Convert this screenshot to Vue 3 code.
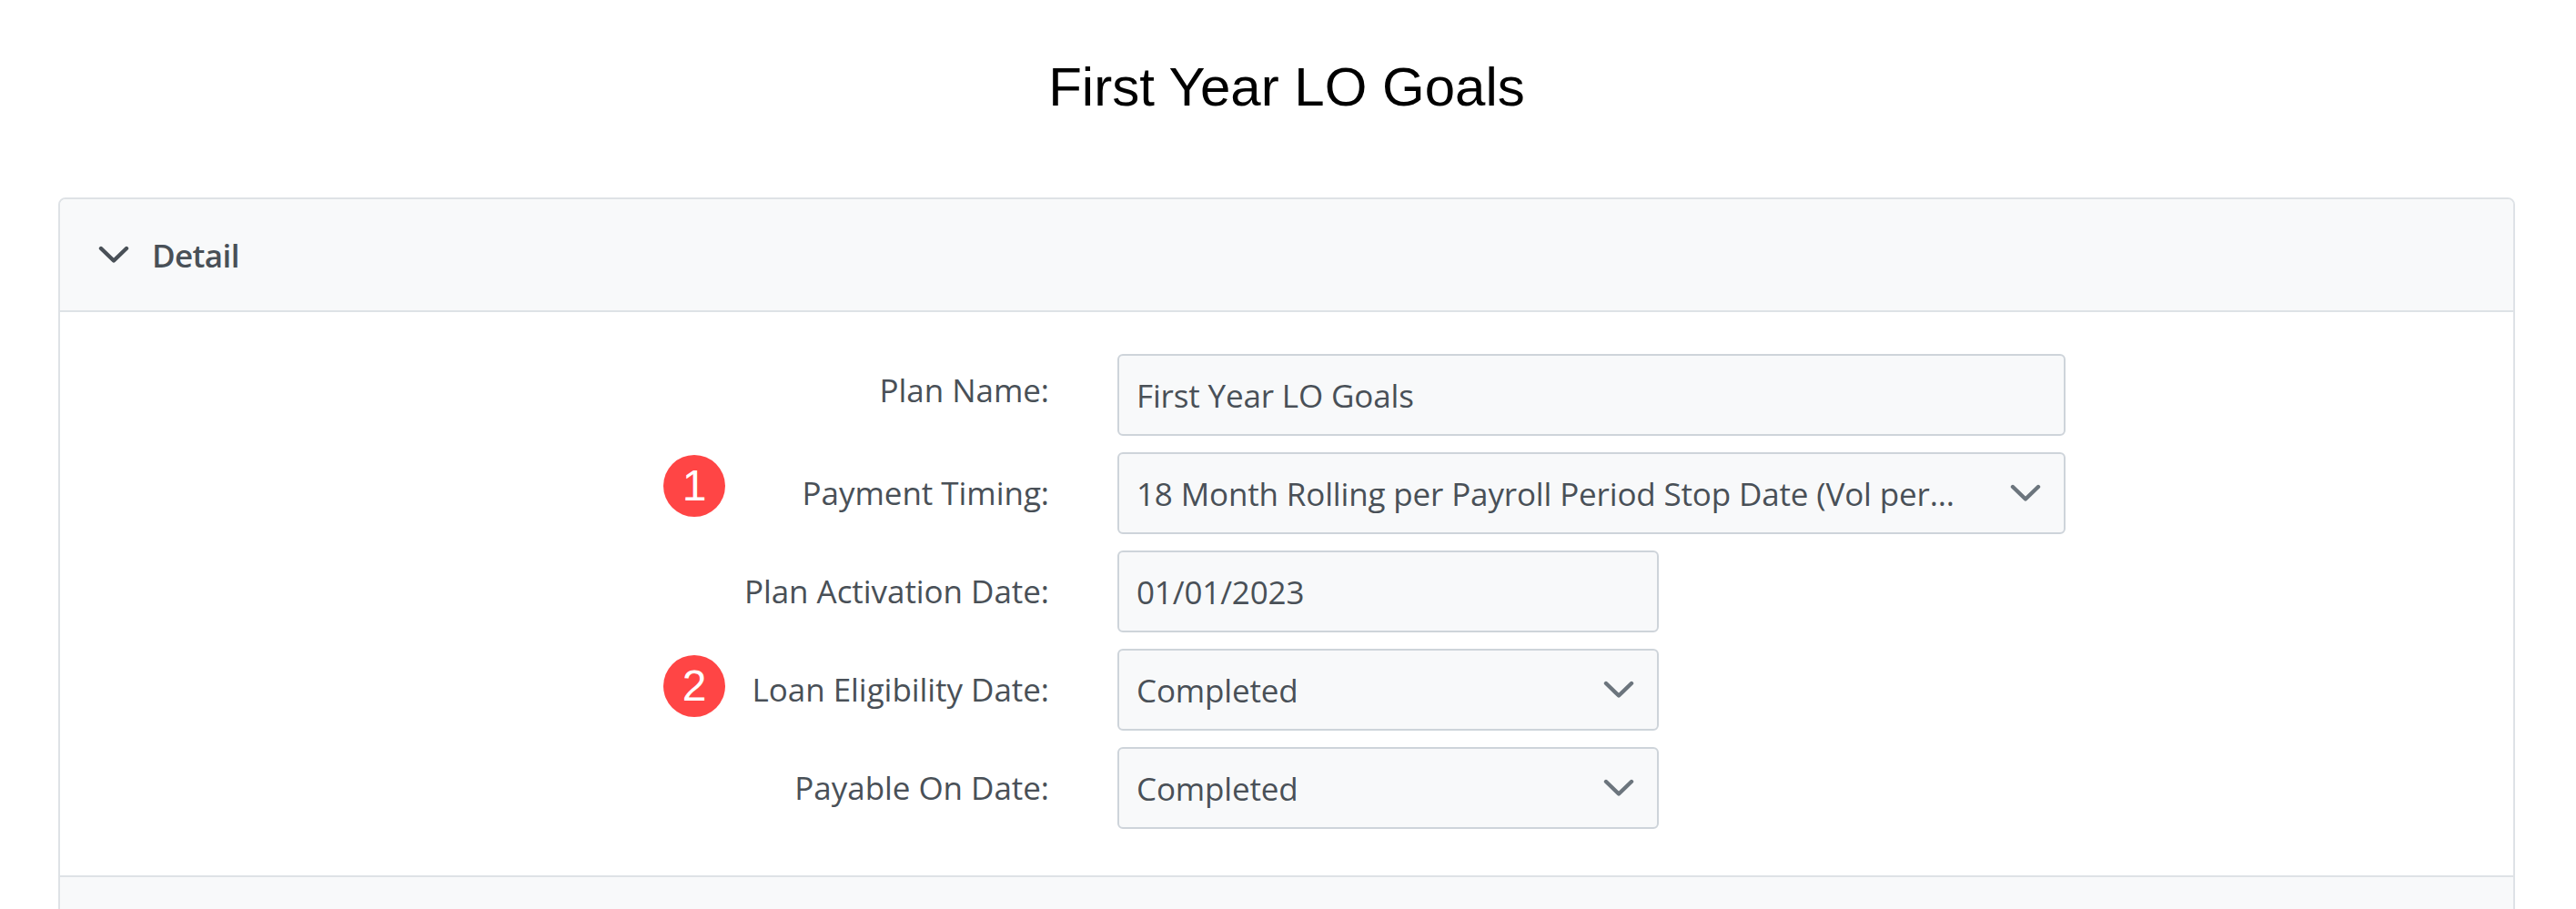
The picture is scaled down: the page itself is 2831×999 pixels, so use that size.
<script setup>
const rows = [
  { label: 'Plan Name:', value: 'First Year LO Goals', size: 'wide', select: false, raised: true },
  { label: 'Payment Timing:', value: '18 Month Rolling per Payroll Period Stop Date (Vol per...', size: 'wide', select: true, badge: 1 },
  { label: 'Plan Activation Date:', value: '01/01/2023', size: 'short', select: false },
  { label: 'Loan Eligibility Date:', value: 'Completed', size: 'short', select: true, badge: 2 },
  { label: 'Payable On Date:', value: 'Completed', size: 'short', select: true },
]
</script>

<template>
  <main class="page">
    <h1 class="title">First Year LO Goals</h1>
    <section class="card">
      <header class="card-head">
        <svg class="head-chevron" viewBox="0 0 34 20" fill="none" aria-hidden="true">
          <path d="M3 3 L17 16.5 L31 3" />
        </svg>
        <span class="head-text">Detail</span>
      </header>
      <div class="card-body">
        <div v-for="row in rows" :key="row.label" class="row">
          <label class="label" :class="{ raised: row.raised }">
            <span v-if="row.badge" class="badge" :class="'badge-' + row.badge">{{ row.badge }}</span>
            {{ row.label }}
          </label>
          <div class="control" :class="row.size">
            <span class="value">{{ row.value }}</span>
            <svg v-if="row.select" class="select-chevron" viewBox="0 0 34 20" fill="none" aria-hidden="true">
              <path d="M3 3 L17 16.5 L31 3" />
            </svg>
          </div>
        </div>
      </div>
      <div class="card-foot"></div>
    </section>
  </main>
</template>

<style>
html, body { margin: 0; background: #fff; overflow: hidden; }
</style>

<style scoped>
.page {
  height: 999px;
  overflow: hidden;
  padding: 0 67px 0 64px;
  box-sizing: border-box;
  font-family: "Open Sans", "Noto Sans", sans-serif;
  color: #495057;
}
.title {
  margin: 0;
  height: 217px;
  padding-top: 61px;
  box-sizing: border-box;
  text-align: center;
  font-family: "Liberation Sans", Arial, sans-serif;
  font-weight: 400;
  font-size: 60px;
  line-height: 70px;
  color: #000;
}
.card {
  border: 2px solid #dee2e6;
  border-radius: 8px 8px 0 0;
  overflow: hidden;
}
.card-head {
  height: 122px;
  background: #f8f9fa;
  border-bottom: 2px solid #dee2e6;
  display: flex;
  align-items: center;
  padding-left: 42px;
}
.head-chevron { width: 34px; height: 20px; flex: none; }
.head-chevron path { stroke: #495057; stroke-width: 4.4; stroke-linecap: round; stroke-linejoin: round; }
.head-text {
  margin-left: 25px;
  padding-top: 2px;
  font-size: 35px;
  font-weight: 600;
  letter-spacing: -0.6px;
  line-height: 46px;
}
.card-body {
  height: 619px;
  box-sizing: border-box;
  padding-top: 46px;
  display: flex;
  flex-direction: column;
  gap: 18px;
}
.row {
  display: grid;
  grid-template-columns: 1087px 1fr;
  column-gap: 75px;
  height: 90px;
}
.label {
  position: relative;
  text-align: right;
  font-size: 35px;
  letter-spacing: -0.05px;
  line-height: 46px;
  padding-top: 22px;
}
.label.raised { padding-top: 17px; }
.badge {
  position: absolute;
  left: 663px;
  width: 68px;
  height: 68px;
  border-radius: 50%;
  background: #ff4545;
  color: #fff;
  font-family: "Liberation Sans", Arial, sans-serif;
  font-size: 48px;
  letter-spacing: 0;
  line-height: 68px;
  text-align: center;
}
.badge-1 { top: 3px; }
.badge-2 { top: 7px; }
.control {
  height: 90px;
  box-sizing: border-box;
  background: #f8f9fa;
  border: 2px solid #ced4da;
  border-radius: 6px;
  padding: 0 25px 0 19px;
  display: flex;
  align-items: center;
  justify-content: space-between;
  font-size: 35px;
  letter-spacing: -0.15px;
  line-height: 46px;
  white-space: nowrap;
}
.value { padding-top: 2px; }
.control.wide { width: 1042px; }
.control.short { width: 595px; }
.select-chevron { width: 34px; height: 20px; flex: none; }
.select-chevron path { stroke: #6c757d; stroke-width: 4.4; stroke-linecap: round; stroke-linejoin: round; }
.card-foot {
  height: 60px;
  background: #f8f9fa;
  border-top: 2px solid #dee2e6;
}
</style>
